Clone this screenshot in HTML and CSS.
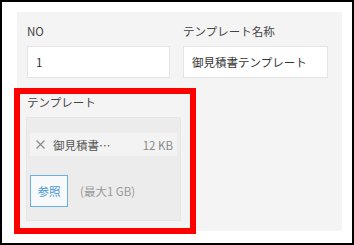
FILE: index.html
```html
<!DOCTYPE html>
<html lang="ja">

<head>
    <meta charset="UTF-8">
    <meta name="viewport" content="width=device-width, initial-scale=1.0">
    <title>テンプレート</title>
    <link rel="stylesheet" href="styles.css">
</head>

<body>
    <div class="frame">
        <div class="panel">
            <div class="fields">
                <div class="field">
                    <label class="field-label">NO</label>
                    <div class="input">1</div>
                </div>
                <div class="field">
                    <label class="field-label">テンプレート名称</label>
                    <div class="input">御見積書テンプレート</div>
                </div>
            </div>

            <div class="field template-field">
                <label class="field-label">テンプレート</label>
                <div class="uploader">
                    <div class="file-row">
                        <svg class="file-remove" width="9" height="9" viewBox="0 0 9 9">
                            <path d="M0.5 0.5 L8.5 8.5 M8.5 0.5 L0.5 8.5" stroke="#8a8a8a" stroke-width="1.2" fill="none" />
                        </svg>
                        <span class="file-name">御見積書…</span>
                        <span class="file-size">12 KB</span>
                    </div>
                    <div class="upload-actions">
                        <button class="browse-btn">参照</button>
                        <span class="upload-limit">(最大1 GB)</span>
                    </div>
                </div>
            </div>

            <div class="highlight"></div>
        </div>
    </div>
</body>

</html>
```

FILE: styles.css
```css
* {
    box-sizing: border-box;
}

body {
    margin: 0;
    font-family: "Noto Sans CJK JP", "Noto Sans", sans-serif;
    font-size: 11.5px;
    color: #333;
    background: #fff;
}

.frame {
    width: 354px;
    height: 245px;
    border: 2px solid #000;
    padding: 10px 10px 0 15px;
}

.panel {
    position: relative;
    background: #f4f4f4;
    padding: 10px 10px 10px 10px;
}

.fields {
    display: grid;
    grid-template-columns: 143px 145px;
    column-gap: 13px;
}

.field-label {
    display: block;
    line-height: 18px;
    margin-bottom: 6px;
    color: #444;
}

.input {
    height: 32px;
    line-height: 30px;
    padding: 0 8px;
    background: #fff;
    border: 1px solid #e4e4e4;
    color: #333;
}

.template-field {
    margin-top: 15px;
}

.uploader {
    width: 155px;
    margin-left: -1px;
    background: #ececec;
    border: 1px solid #e6e6e6;
    padding: 15px 3px 13px 3px;
}

.file-row {
    display: flex;
    align-items: center;
    height: 23px;
    padding: 0 4px 0 6px;
    background: #f3f3f3;
    color: #555;
}

.file-remove {
    margin-right: 8px;
}

.file-name {
    white-space: nowrap;
}

.file-size {
    margin-left: auto;
    color: #888;
}

.upload-actions {
    display: flex;
    align-items: center;
    gap: 12px;
    margin-top: 19px;
}

.browse-btn {
    width: 38px;
    height: 32px;
    padding: 0;
    font-family: inherit;
    font-size: 11.5px;
    color: #4a97d6;
    background: #f7f9fb;
    border: 1px solid #6aaee2;
}

.upload-limit {
    color: #999;
}

.highlight {
    position: absolute;
    left: -3px;
    top: 76px;
    width: 182px;
    height: 146px;
    border: 6px solid #ff0000;
}
```
